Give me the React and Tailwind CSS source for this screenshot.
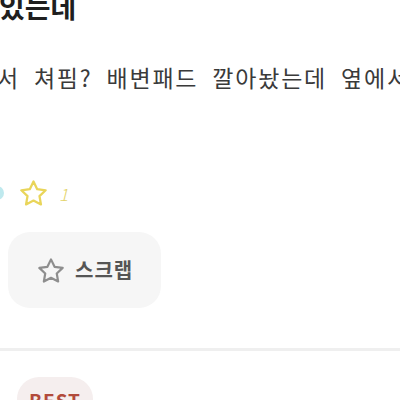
import React from "react";

const FONT = { fontFamily: '"Noto Sans CJK KR", "Noto Sans", sans-serif' };

function StarIcon({ className, stroke }) {
  return (
    <svg viewBox="2.6 2.2 18.8 18.2" className={className} fill="none" stroke={stroke} strokeWidth="1.6" strokeLinejoin="round">
      <path d="M12 3.2l2.6 5.4 5.9.8-4.3 4.1 1 5.8L12 16.6l-5.2 2.7 1-5.8-4.3-4.1 5.9-.8z" />
    </svg>
  );
}

export default function App() {
  return (
    <div className="w-[400px] h-[400px] overflow-hidden bg-white" style={FONT}>
      {/* Title (cut off above) */}
      <h1 className="-mt-[13px] -ml-[1px] whitespace-nowrap text-[28px] leading-[38px] font-bold text-[#1f1f1f]">
        있는데
      </h1>

      {/* Body text line */}
      <p className="mt-[36px] -ml-[3px] whitespace-nowrap text-[23px] leading-[32px] text-[#3a3a3a] tracking-[1.8px] [word-spacing:7px]">
        서 쳐핌? 배변패드 깔아놨는데 옆에서
      </p>

      {/* Reaction row */}
      <div className="mt-[86px] flex items-center h-[28px]">
        <div className="-ml-[10px] w-[14px] h-[14px] rounded-full bg-[#bfe9ee]" />
        <StarIcon className="ml-[16px] w-[27px] h-[26px]" stroke="#e9d55a" />
        <span className="ml-[12px] text-[17px] leading-none text-[#e3d36a] italic font-light">1</span>
      </div>

      {/* Scrap button */}
      <div className="mt-[25px] ml-[8px] w-[153px] h-[76px] rounded-[22px] bg-[#f6f6f6] flex items-center pl-[30px] gap-[11px]">
        <StarIcon className="w-[26px] h-[25px]" stroke="#8e8e8e" />
        <span className="text-[20px] font-bold text-[#555] tracking-[1px]">스크랩</span>
      </div>

      {/* Divider */}
      <div className="mt-[40px] h-[3px] bg-[#efefef]" />

      {/* BEST badge */}
      <div className="mt-[26px] ml-[17px] w-[76px] h-[44px] rounded-full bg-[#f5eeee] flex justify-center pt-[13px]">
        <span className="text-[19px] leading-none font-bold text-[#b24a3b] tracking-[1px]">BEST</span>
      </div>
    </div>
  );
}
